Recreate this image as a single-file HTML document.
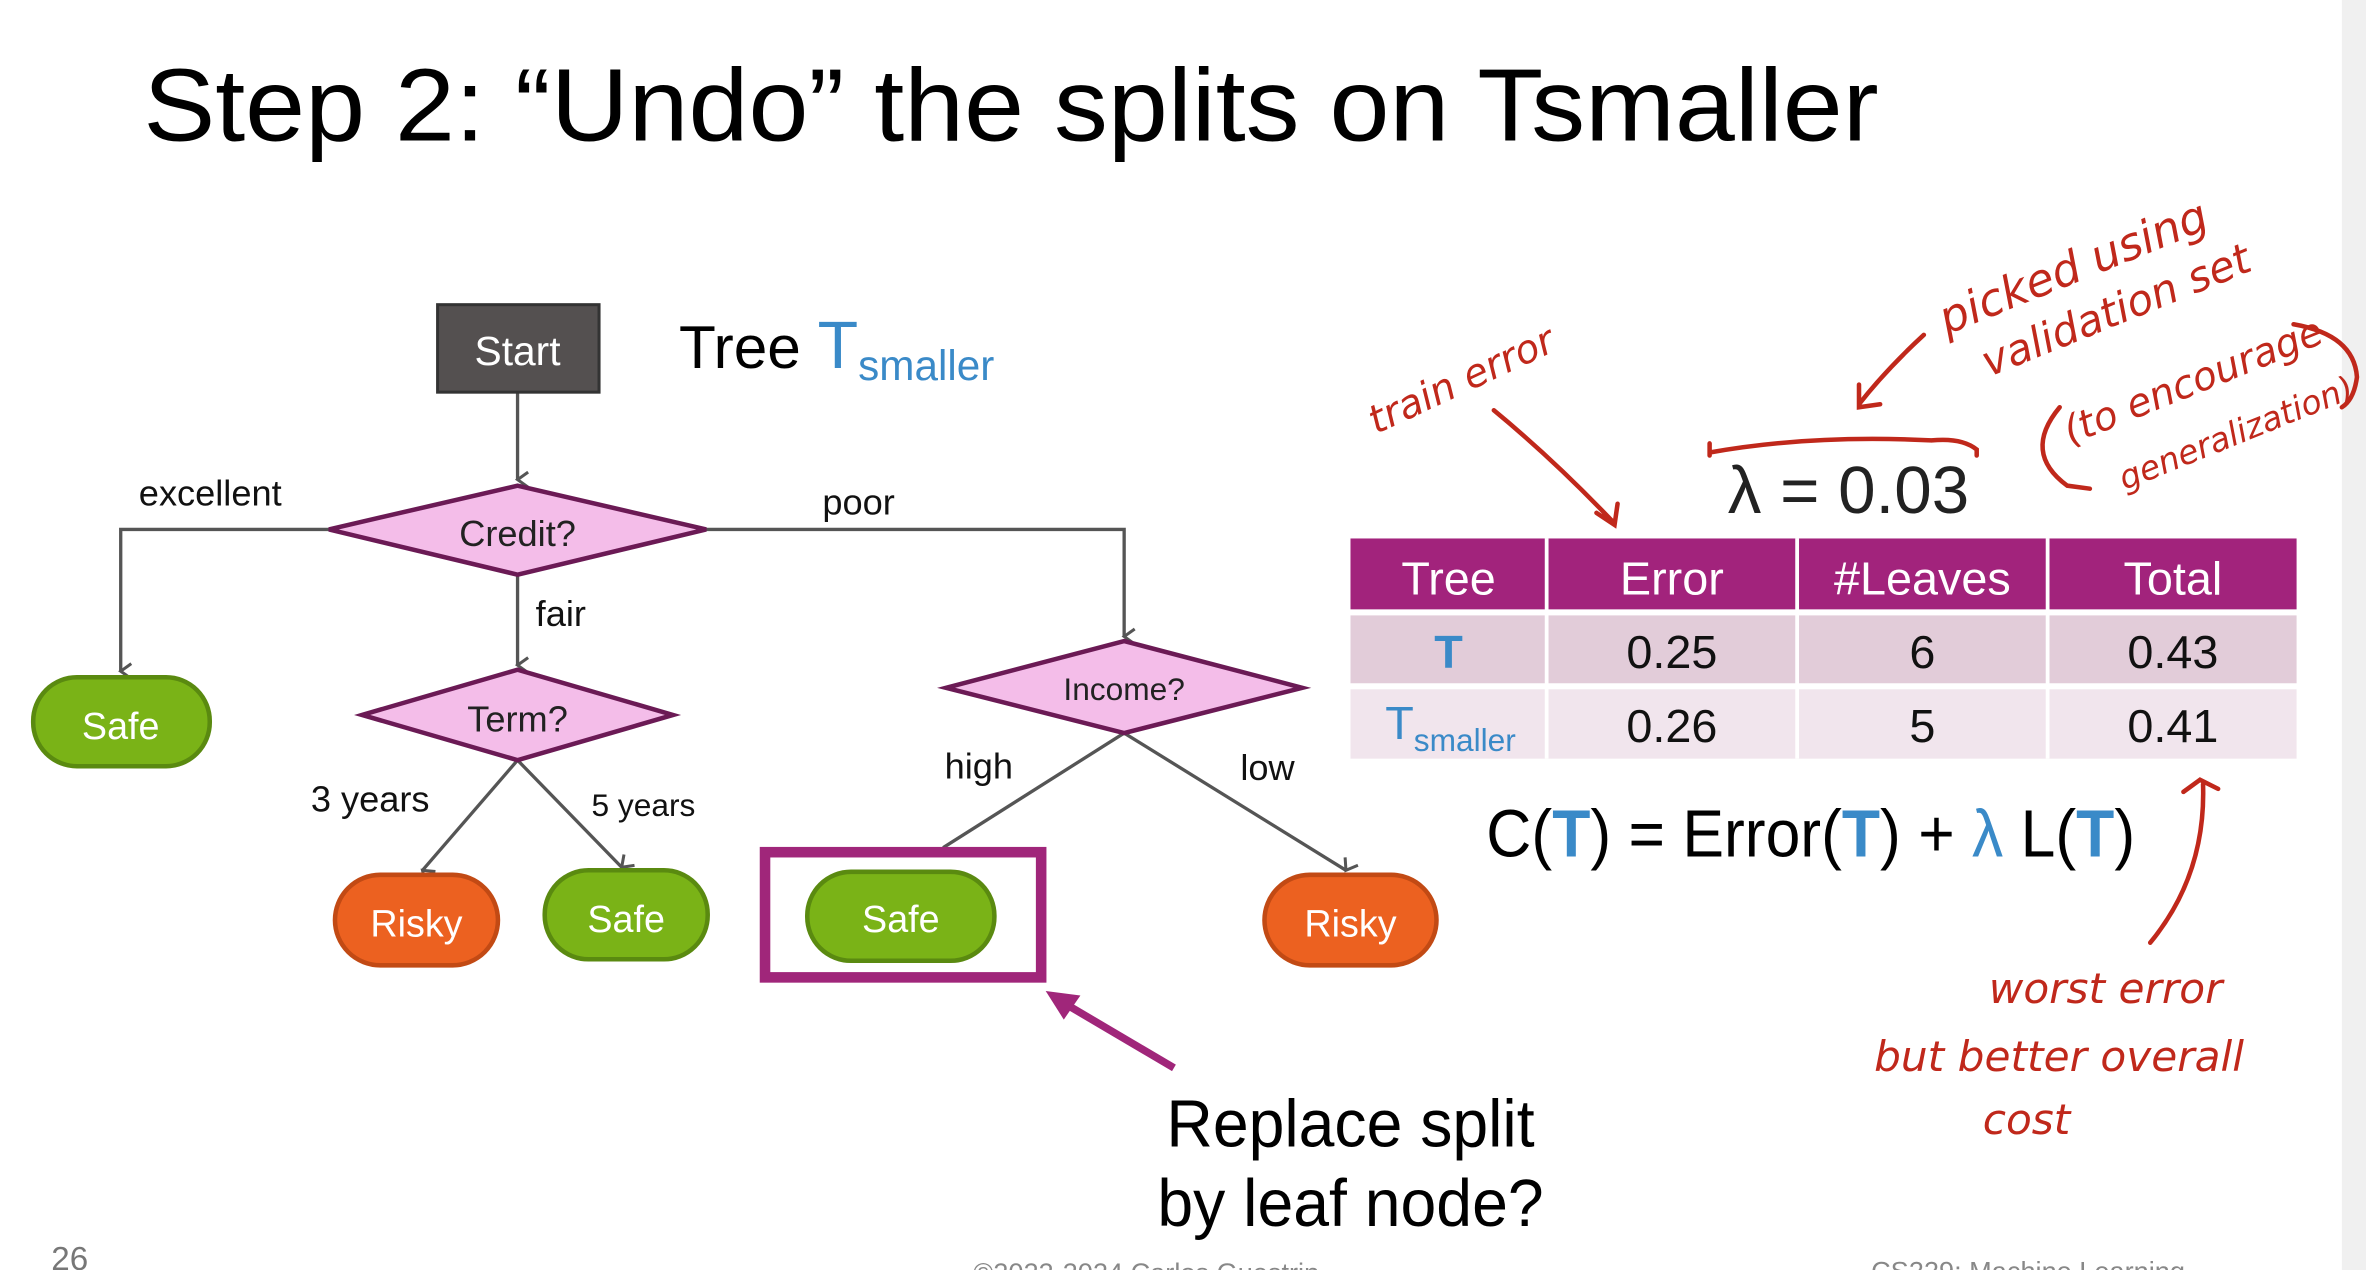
<!DOCTYPE html>
<html><head><meta charset="utf-8"><style>
html,body{margin:0;padding:0;background:#fff;overflow:hidden}
svg{display:block}
text{font-family:"Liberation Sans",sans-serif}
.h{font-family:"DejaVu Sans",sans-serif;font-style:italic;fill:#c0281b}
</style></head><body>
<svg width="2366" height="1270" viewBox="0 0 1568 842" preserveAspectRatio="none" xmlns="http://www.w3.org/2000/svg">
<defs>
<marker id="ag" markerWidth="14" markerHeight="14" refX="7" refY="11" orient="auto" markerUnits="userSpaceOnUse" viewBox="0 0 14 14"><path d="M2 4 L7 11 L12 4" fill="none" stroke="#555" stroke-width="2"/></marker>
</defs>
<rect x="1552" y="0" width="16" height="842" fill="#f0f0f0"/>
<text x="95" y="93" font-size="68" fill="#000" textLength="1150" lengthAdjust="spacingAndGlyphs">Step 2: “Undo” the splits on Tsmaller</text>

<g stroke="#555" stroke-width="2.2" fill="none">
<path d="M343 260 V318" marker-end="url(#ag)"/>
<path d="M218 351 H80 V445" marker-end="url(#ag)"/>
<path d="M468 351 H745 V422" marker-end="url(#ag)"/>
<path d="M343 381 V441" marker-end="url(#ag)"/>
<path d="M343 504 L280 577" marker-end="url(#ag)"/>
<path d="M343 504 L412 575" marker-end="url(#ag)"/>
<path d="M745 486 L625 562"/>
<path d="M745 486 L892 577" marker-end="url(#ag)"/>
</g>

<rect x="290" y="202" width="107" height="58" fill="#545050" stroke="#333" stroke-width="2"/>
<text x="343" y="242" font-size="27" fill="#fff" text-anchor="middle">Start</text>
<text x="450" y="244" font-size="40" fill="#000">Tree <tspan fill="#3a8ac8" font-size="44">T</tspan><tspan fill="#3a8ac8" font-size="28" dy="8">smaller</tspan></text>

<g fill="#f4bde9" stroke="#6b1a55" stroke-width="3">
<path d="M218 351 L343 322 L468 351 L343 381 Z"/>
<path d="M240 474 L343 444 L446 474 L343 504 Z"/>
<path d="M627 456 L745 425 L863 456 L745 486 Z"/>
</g>
<g font-size="24" fill="#222" text-anchor="middle">
<text x="343" y="362">Credit?</text>
<text x="343" y="485">Term?</text>
<text x="745" y="464" font-size="21">Income?</text>
</g>
<g font-size="24" fill="#111">
<text x="92" y="335">excellent</text>
<text x="545" y="341">poor</text>
<text x="355" y="415">fair</text>
<text x="206" y="538">3 years</text>
<text x="392" y="541" font-size="21">5 years</text>
<text x="626" y="516">high</text>
<text x="822" y="517">low</text>
</g>

<g stroke-width="3">
<rect x="22" y="449" width="117" height="59" rx="29" fill="#7ab317" stroke="#5a8a10"/>
<rect x="222" y="580" width="108" height="60" rx="30" fill="#ec6120" stroke="#c24a14"/>
<rect x="361" y="577" width="108" height="59" rx="29" fill="#7ab317" stroke="#5a8a10"/>
<rect x="535" y="578" width="124" height="59" rx="29" fill="#7ab317" stroke="#5a8a10"/>
<rect x="838" y="580" width="114" height="60" rx="30" fill="#ec6120" stroke="#c24a14"/>
</g>
<g font-size="25" fill="#fff" text-anchor="middle">
<text x="80" y="490">Safe</text>
<text x="276" y="621">Risky</text>
<text x="415" y="618">Safe</text>
<text x="597" y="618">Safe</text>
<text x="895" y="621">Risky</text>
</g>
<rect x="507" y="565" width="183" height="83" fill="none" stroke="#a0267a" stroke-width="7"/>
<path d="M778 708 L700 662" stroke="#a0267a" stroke-width="5"/>
<path d="M693 657 L716 660 L705 676 Z" fill="#a0267a"/>
<text x="895" y="760" font-size="44" text-anchor="middle" fill="#000" textLength="244" lengthAdjust="spacingAndGlyphs">Replace split</text>
<text x="895" y="813" font-size="44" text-anchor="middle" fill="#000" textLength="256" lengthAdjust="spacingAndGlyphs">by leaf node?</text>

<text x="34" y="842" font-size="22" fill="#777">26</text>
<text x="645" y="850" font-size="18" fill="#888">©2022-2024 Carlos Guestrin</text>
<text x="1240" y="849" font-size="18" fill="#888">CS229: Machine Learning</text>

<text x="1145" y="340" font-size="44" fill="#222" textLength="160" lengthAdjust="spacingAndGlyphs">λ = 0.03</text>

<rect x="895" y="357" width="627" height="47" fill="#a2237c"/>
<rect x="895" y="408" width="627" height="45" fill="#e2ccd9"/>
<rect x="895" y="457" width="627" height="46" fill="#f1e5ed"/>
<g stroke="#fff" stroke-width="2.5">
<path d="M1025 357 V503 M1191 357 V503 M1357 357 V503"/>
</g>
<g font-size="31" text-anchor="middle" fill="#fff">
<text x="960" y="394">Tree</text><text x="1108" y="394">Error</text><text x="1274" y="394">#Leaves</text><text x="1440" y="394">Total</text>
</g>
<g font-size="31" text-anchor="middle" fill="#111">
<text x="960" y="443" fill="#3a8ac8" font-weight="bold">T</text>
<text x="1108" y="443">0.25</text><text x="1274" y="443">6</text><text x="1440" y="443">0.43</text>
<text x="1108" y="492">0.26</text><text x="1274" y="492">5</text><text x="1440" y="492">0.41</text>
</g>
<text x="918" y="490" font-size="31" fill="#3a8ac8">T<tspan font-size="21" dy="8">smaller</tspan></text>

<text x="985" y="568" font-size="44" fill="#000" textLength="430" lengthAdjust="spacingAndGlyphs">C(<tspan fill="#3a8ac8" font-weight="bold">T</tspan>) = Error(<tspan fill="#3a8ac8" font-weight="bold">T</tspan>) + <tspan fill="#3a8ac8">λ</tspan> L(<tspan fill="#3a8ac8" font-weight="bold">T</tspan>)</text>

<g stroke="#c0281b" stroke-width="3" fill="none" stroke-linecap="round">
<path d="M990 272 Q1030 305 1068 345 M1058 340 L1070 348 L1072 334"/>
<path d="M1275 222 Q1250 245 1232 268 M1232 255 L1232 270 L1246 268"/>
<path d="M1133 300 Q1200 288 1280 292 Q1300 290 1310 298 V302 M1133 294 V302"/>
<path d="M1460 520 Q1462 580 1425 625 M1447 525 L1458 517 L1470 523"/>
<path d="M1520 215 Q1560 222 1562 250 Q1560 265 1552 270"/>
<path d="M1365 270 Q1340 300 1370 322 L1385 324"/>
</g>
<text class="h" x="912" y="288" font-size="26" transform="rotate(-25 912 288)">train error</text>
<text class="h" x="1290" y="222" font-size="30" transform="rotate(-22 1290 222)">picked using</text>
<text class="h" x="1318" y="250" font-size="28" transform="rotate(-22 1318 250)">validation set</text>
<text class="h" x="1372" y="295" font-size="26" transform="rotate(-22 1372 295)">(to encourage</text>
<text class="h" x="1408" y="325" font-size="22" transform="rotate(-22 1408 325)">generalization)</text>
<text class="h" x="1318" y="665" font-size="28">worst error</text>
<text class="h" x="1242" y="710" font-size="28">but  better overall</text>
<text class="h" x="1314" y="752" font-size="28">cost</text>
</svg>
</body></html>
